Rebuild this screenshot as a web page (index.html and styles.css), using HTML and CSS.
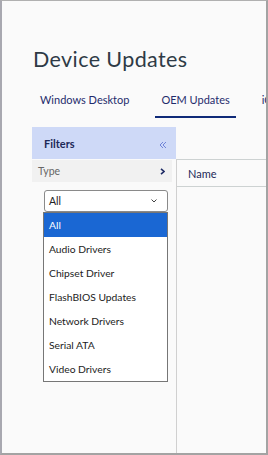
FILE: index.html
```html
<!DOCTYPE html>
<html>
<head>
<meta charset="utf-8">
<link rel="stylesheet" href="styles.css">
</head>
<body>
<div class="frame">
  <h1 class="title">Device Updates</h1>
  <nav class="tabs">
    <div class="tab">Windows Desktop</div>
    <div class="tab active">OEM Updates</div>
    <div class="tab">iOS Updates</div>
  </nav>
  <div class="main">
    <aside class="filters">
      <div class="filters-head">
        <span class="filters-title">Filters</span>
        <svg class="collapse" width="8" height="8" viewBox="0 0 8 8"><path d="M4 1 L1 4 L4 7 M7 1 L4 4 L7 7" fill="none" stroke="#7084d8" stroke-width="1"/></svg>
      </div>
      <div class="type-row">
        <span>Type</span>
        <svg class="chev" width="5" height="7" viewBox="0 0 5 7"><path d="M1 0.8 L4 3.5 L1 6.2" fill="none" stroke="#1f2c66" stroke-width="1.6"/></svg>
      </div>
      <div class="select-wrap">
        <div class="select">
          <span>All</span>
          <svg class="caret" width="6" height="4" viewBox="0 0 6 4"><path d="M0.5 0.5 L3 3 L5.5 0.5" fill="none" stroke="#444" stroke-width="1"/></svg>
        </div>
        <ul class="options">
          <li class="opt selected">All</li>
          <li class="opt">Audio Drivers</li>
          <li class="opt">Chipset Driver</li>
          <li class="opt">FlashBIOS Updates</li>
          <li class="opt">Network Drivers</li>
          <li class="opt">Serial ATA</li>
          <li class="opt">Video Drivers</li>
        </ul>
      </div>
    </aside>
    <section class="grid">
      <div class="grid-head">Name</div>
    </section>
  </div>
</div>
</body>
</html>
```
FILE: styles.css
```css
* { box-sizing: border-box; }
html, body { margin: 0; padding: 0; }
body {
  font-family: Lato, "Open Sans", sans-serif;
  background: #fff;
}
.frame {
  width: 268px;
  height: 455px;
  background: #fafafa;
  border-top: 1px solid #b0b0b0;
  border-left: 2px solid #a8a8b0;
  border-right: 2px solid #a3a3a3;
  border-bottom: 2px solid #a3a3a3;
  overflow: hidden;
  display: flex;
  flex-direction: column;
}
.title {
  margin: 44px 0 0 31px;
  font-size: 21.5px;
  letter-spacing: 0.4px;
  line-height: 28px;
  font-weight: 400;
  color: #2e3a46;
  white-space: nowrap;
}
.tabs {
  display: flex;
  gap: 20px;
  margin: 15px 0 0 32px;
  white-space: nowrap;
}
.tab {
  padding: 5px 6px 0;
  font-size: 11px;
  line-height: 14px;
  height: 30px;
  color: #1f2c6c;
  border-bottom: 2px solid transparent;
  flex: none;
}
.tab.active { border-bottom-color: #0f2a78; }
.main {
  display: flex;
  margin-top: 9px;
  margin-left: 30px;
  flex: 1;
}
.filters {
  width: 144px;
  flex: none;
}
.filters-head {
  height: 32px;
  background: #ced9f7;
  display: flex;
  align-items: center;
  justify-content: space-between;
  padding: 0 9px 0 12px;
}
.filters-title {
  font-size: 11px;
  font-weight: 700;
  color: #1d2958;
}
.collapse { margin-top: 3px; }
.type-row {
  margin-top: 1px;
  margin-right: 4px;
  height: 22px;
  background: #f1f1f1;
  display: flex;
  align-items: center;
  justify-content: space-between;
  padding: 0 7px 0 6px;
  font-size: 10.5px;
  color: #666;
}
.select-wrap {
  position: relative;
  margin: 8px 8px 0 12px;
}
.select {
  height: 22px;
  border: 1px solid #8a8a8a;
  border-radius: 3px;
  background: #fff;
  display: flex;
  align-items: center;
  justify-content: space-between;
  padding: 0 10px 0 4px;
  font-size: 10.5px;
  color: #222;
}
.options {
  position: absolute;
  top: 100%;
  left: -1px;
  width: 125px;
  margin: 0;
  padding: 0;
  list-style: none;
  background: #fff;
  border: 1px solid #767676;
}
.opt {
  height: 24px;
  line-height: 24px;
  padding-left: 5px;
  font-size: 10.3px;
  color: #1c1c1c;
  white-space: nowrap;
}
.opt.selected { background: #1a67d3; color: #fff; }
.grid {
  flex: 1;
  margin-top: 32px;
  border-left: 1px solid #d0d0d0;
}
.grid-head {
  border-top: 1px solid #cdd2d2;
  border-bottom: 1px solid #cdd2d2;
  height: 28px;
  padding-left: 11px;
  display: flex;
  align-items: center;
  font-size: 11px;
  color: #1d2958;
}
```
